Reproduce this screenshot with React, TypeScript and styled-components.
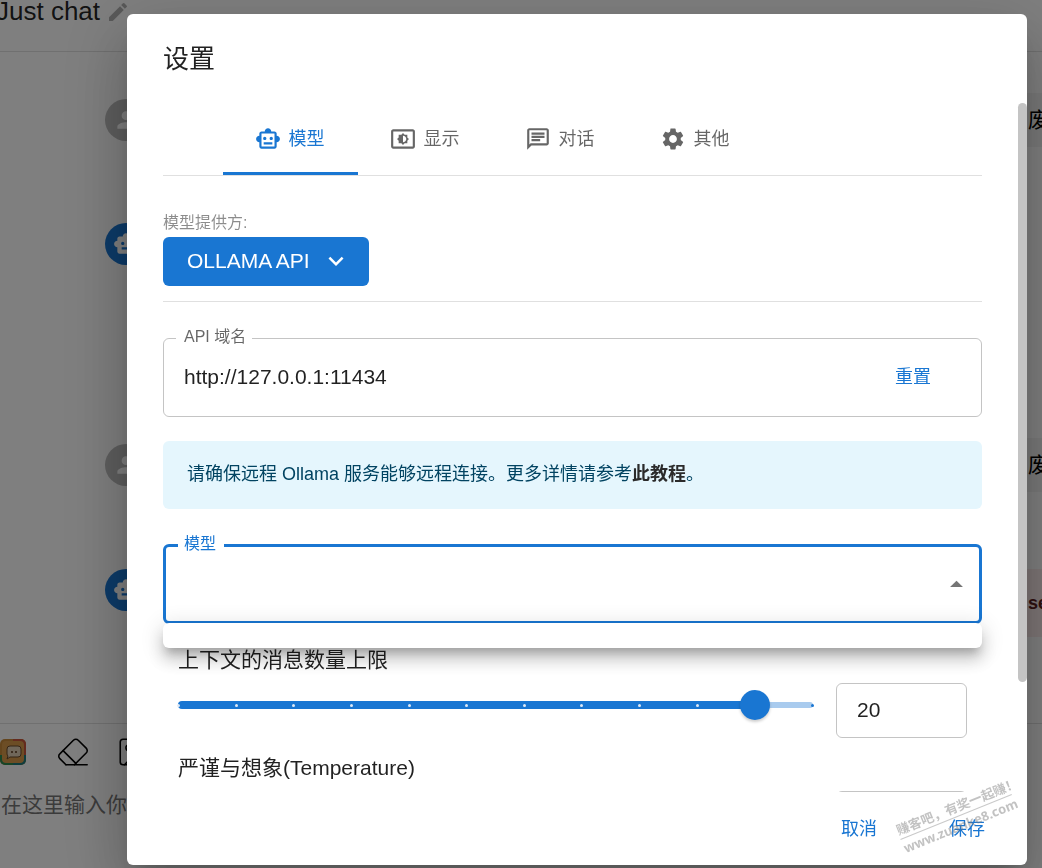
import React, { useState } from "react";
import styled, { createGlobalStyle } from "styled-components";
import {
  MdArrowDropUp,
  MdEdit,
  MdKeyboardArrowDown,
  MdOutlineChat,
  MdOutlineSmartToy,
  MdPerson,
  MdSettings,
  MdSettingsBrightness,
  MdSmartToy,
} from "react-icons/md";

const blue = "#1976d2";
const textColor = "rgba(0, 0, 0, 0.87)";
const mutedColor = "rgba(0, 0, 0, 0.6)";
const lineColor = "rgba(0, 0, 0, 0.12)";
const outlineColor = "rgba(0, 0, 0, 0.23)";

const GlobalStyle = createGlobalStyle`
  *, *::before, *::after { box-sizing: border-box; }
  body {
    margin: 0;
    overflow: hidden;
    background: #fff;
    color: ${textColor};
    font-family: "Liberation Sans", "Noto Sans CJK SC", sans-serif;
    font-size: 21px;
    font-weight: 400;
    line-height: 32px;
  }
  button, input, select, textarea { font: inherit; color: inherit; }
`;

/* Chat page behind the dialog */

const ChatPage = styled.div`
  display: flex;
  flex-direction: column;
  height: 100vh;
  overflow: hidden;
`;

const ChatHeader = styled.header`
  display: flex;
  align-items: flex-start;
  gap: 5px;
  flex: none;
  height: 52px;
  margin-left: -4px;
  border-bottom: 1px solid ${lineColor};
`;

const ChatTitle = styled.h1`
  margin: 0;
  font-size: 26px;
  font-weight: 400;
  line-height: 22px;
`;

const EditIcon = styled(MdEdit)`
  width: 26px;
  height: 24px;
  color: rgba(0, 0, 0, 0.3);
`;

const Messages = styled.main`
  display: flex;
  flex-direction: column;
  flex: 1;
  min-height: 0;
  padding: 41px 0 0 105px;
  overflow: hidden;
`;

const Message = styled.article<{ $height: number }>`
  display: flex;
  align-items: flex-start;
  flex: none;
  gap: 24px;
  height: ${(p) => p.$height}px;
`;

const Avatar = styled.div<{ $bot?: boolean }>`
  display: flex;
  align-items: center;
  justify-content: center;
  flex: none;
  width: 42px;
  height: 42px;
  margin-top: 6px;
  border-radius: 50%;
  background: ${(p) => (p.$bot ? blue : "#bdbdbd")};
  color: #fff;

  svg {
    width: 26px;
    height: 26px;
  }
`;

const Bubble = styled.div<{ $error?: boolean }>`
  display: flex;
  justify-content: flex-end;
  flex: 1;
  min-width: 0;
  margin-top: ${(p) => (p.$error ? 6 : 0)}px;
  padding: ${(p) => (p.$error ? "18px 0" : "11px 0")};
  background: ${(p) => (p.$error ? "#fdeded" : "#f4f4f4")};
  color: ${(p) => (p.$error ? "#5f2120" : "#000")};
  font-size: ${(p) => (p.$error ? 18 : 21)}px;
  font-weight: ${(p) => (p.$error ? 700 : 400)};
`;

const BubbleText = styled.span`
  width: 14px;
  white-space: nowrap;
`;

const Composer = styled.footer`
  display: flex;
  flex-direction: column;
  flex: none;
  height: 145px;
  padding-top: 11px;
  border-top: 1px solid ${lineColor};
`;

const ComposerTools = styled.div`
  display: flex;
  gap: 26px;
  margin-left: -4px;
`;

const ToolButton = styled.button`
  width: 34px;
  height: 34px;
  padding: 0;
  border: 0;
  background: none;

  svg {
    display: block;
    width: 34px;
    height: 34px;
  }
`;

const ComposerInput = styled.textarea`
  flex: 1;
  margin-top: 20px;
  padding: 0 0 0 1px;
  border: 0;
  outline: 0;
  resize: none;
  background: none;

  &::placeholder {
    color: #777;
  }
`;

/* Dialog */

const Backdrop = styled.div`
  position: fixed;
  inset: 0;
  display: flex;
  padding: 14px 15px 3px 127px;
  background: rgba(0, 0, 0, 0.5);
`;

const Dialog = styled.section`
  position: relative;
  display: flex;
  flex-direction: column;
  flex: 1;
  min-width: 0;
  border-radius: 6px;
  background: #fff;
  box-shadow:
    0 16px 22px -10px rgba(0, 0, 0, 0.2),
    0 36px 57px 4px rgba(0, 0, 0, 0.14),
    0 14px 69px 12px rgba(0, 0, 0, 0.12);
`;

const DialogTitle = styled.h2`
  flex: none;
  margin: 0;
  padding: 25px 36px 24px;
  font-size: 26px;
  font-weight: 400;
  line-height: 40px;
`;

const DialogBody = styled.div`
  display: flex;
  flex: 1;
  min-height: 0;
`;

const Content = styled.div`
  flex: 1;
  min-width: 0;
  padding: 0 36px;
  overflow: hidden;
`;

const Scrollbar = styled.div`
  flex: none;
  width: 9px;
`;

const ScrollThumb = styled.div`
  height: 84%;
  border-radius: 5px;
  background: #c4c4c4;
`;

const Tabs = styled.div`
  display: flex;
  height: 73px;
  padding-left: 60px;
  border-bottom: 1px solid ${lineColor};
`;

const Tab = styled.button<{ $active: boolean }>`
  display: flex;
  align-items: center;
  justify-content: center;
  gap: 8px;
  width: 135px;
  padding: 2px 2px 0 0;
  border: 0;
  border-bottom: 3px solid ${(p) => (p.$active ? blue : "transparent")};
  background: none;
  color: ${(p) => (p.$active ? blue : mutedColor)};
  font-size: 18px;
  line-height: 24px;

  svg {
    width: 26px;
    height: 26px;
  }
`;

const Provider = styled.div`
  display: flex;
  flex-direction: column;
  align-items: flex-start;
  padding: 34px 0 15px;
  border-bottom: 1px solid ${lineColor};
`;

const ProviderLabel = styled.span`
  margin-bottom: 2px;
  color: rgba(0, 0, 0, 0.45);
  font-size: 16px;
  line-height: 25px;
`;

const ProviderButton = styled.button`
  display: flex;
  align-items: center;
  gap: 11px;
  height: 49px;
  padding: 0 18px 2px 24px;
  border: 0;
  border-radius: 6px;
  background: ${blue};
  color: #fff;

  svg {
    width: 30px;
    height: 30px;
  }
`;

const Field = styled.fieldset<{ $focused?: boolean }>`
  min-width: 0;
  height: 90px;
  margin: 25px 0 0;
  padding: 0 20px;
  border: ${(p) => (p.$focused ? `3px solid ${blue}` : `1px solid ${outlineColor}`)};
  border-radius: 6px;

  legend {
    margin-left: -8px;
    padding: ${(p) => (p.$focused ? "0 8px 2px 6px" : "0 6px 2px 8px")};
    color: ${(p) => (p.$focused ? blue : mutedColor)};
    font-size: 16px;
    line-height: 20px;
  }
`;

const FieldRow = styled.div`
  display: flex;
  align-items: center;
  height: 56px;
`;

const TextInput = styled.input`
  flex: 1;
  min-width: 0;
  padding: 0;
  border: 0;
  outline: 0;
  background: none;
`;

const TextButton = styled.button`
  padding: 8px 12px;
  border: 0;
  background: none;
  color: ${blue};
  font-size: 18px;
  line-height: 24px;
`;

const ResetButton = styled(TextButton)`
  margin-right: 18px;
`;

const Notice = styled.p`
  margin: 24px 0 0;
  padding: 17px 24px 19px;
  border-radius: 6px;
  background: #e5f6fd;
  color: #014361;
  font-size: 18px;
  line-height: 32px;

  a {
    color: #2b2b2b;
    font-weight: 700;
    text-decoration: none;
  }
`;

const SelectWrap = styled.div`
  position: relative;
`;

const ModelSelect = styled.select`
  appearance: none;
  width: 100%;
  height: 48px;
  border: 0;
  outline: 0;
  background: none;
`;

const SelectArrow = styled(MdArrowDropUp)`
  position: absolute;
  right: 10px;
  bottom: 24px;
  width: 31px;
  height: 31px;
  color: rgba(0, 0, 0, 0.54);
  pointer-events: none;
`;

const Menu = styled.ul`
  position: absolute;
  top: 100%;
  left: 0;
  right: 0;
  z-index: 1;
  height: 25px;
  margin: -1px 0 0;
  padding: 0;
  border-radius: 6px;
  background: #fff;
  box-shadow:
    0 8px 8px -4px rgba(0, 0, 0, 0.2),
    0 12px 15px 1px rgba(0, 0, 0, 0.14),
    0 4px 21px 3px rgba(0, 0, 0, 0.12);
`;

const SliderGroup = styled.div`
  display: flex;
  flex-direction: column;
  gap: 21px;
  padding: 20px 15px 24px;
`;

const SliderSetting = styled.div`
  label {
    display: block;
  }
`;

const SliderRow = styled.div`
  display: flex;
  align-items: flex-start;
  gap: 23px;
  margin-top: 7px;
  height: 48px;
`;

const Slider = styled.div`
  position: relative;
  display: flex;
  align-items: center;
  flex: 1;
  height: 44px;
`;

const Rail = styled.div`
  position: absolute;
  left: 0;
  right: 0;
  height: 6px;
  border-radius: 3px;
  background: #a9cbee;
`;

const Fill = styled.div`
  position: absolute;
  left: 0;
  height: 8px;
  border-radius: 4px;
  background: ${blue};
`;

const Marks = styled.div`
  position: absolute;
  left: -1px;
  right: -1px;
  display: flex;
  justify-content: space-between;
`;

const Mark = styled.span<{ $passed: boolean }>`
  width: 3px;
  height: 3px;
  border-radius: 50%;
  background: ${(p) => (p.$passed ? "#dfeaf7" : blue)};
`;

const RangeInput = styled.input`
  appearance: none;
  position: absolute;
  left: -15px;
  width: calc(100% + 30px);
  height: 30px;
  margin: 0;
  background: none;

  &::-webkit-slider-thumb {
    appearance: none;
    width: 30px;
    height: 30px;
    border: 0;
    border-radius: 50%;
    background: ${blue};
    box-shadow: 0 2px 3px rgba(0, 0, 0, 0.2);
  }
`;

const NumberInput = styled.input`
  flex: none;
  width: 131px;
  height: 55px;
  padding: 0 20px 2px;
  border: 1px solid ${outlineColor};
  border-radius: 6px;
  background: none;
`;

const Actions = styled.div`
  display: flex;
  justify-content: flex-end;
  align-items: center;
  flex: none;
  gap: 48px;
  height: 73px;
  padding-right: 30px;
`;

const Watermark = styled.div`
  position: absolute;
  right: 3px;
  bottom: 31px;
  width: 128px;
  color: rgba(120, 120, 120, 0.45);
  font-size: 13px;
  font-weight: 700;
  line-height: 17px;
  white-space: nowrap;
  transform: rotate(-22deg);
  pointer-events: none;
`;

const WatermarkSite = styled.div`
  margin-right: 8px;
  border-top: 1px solid rgba(120, 120, 120, 0.4);
  font-family: "Noto Sans", sans-serif;
  line-height: 18px;
`;

function AppLogo() {
  return (
    <svg viewBox="0 0 34 34" aria-hidden="true">
      <rect x="4" y="4" width="26" height="26" rx="5" fill="#c98a3a" />
      <path d="M17 4h8a5 5 0 0 1 5 5v13H17z" fill="#c8553c" />
      <path d="M4 20h13v10H9a5 5 0 0 1-5-5z" fill="#2f8a50" />
      <path d="M17 20h13v5a5 5 0 0 1-5 5h-8z" fill="#1f7a7c" />
      <rect x="6" y="6" width="22" height="22" rx="4" fill="#d99a4a" />
      <path
        d="M14 11h8a3 3 0 0 1 3 3v5a3 3 0 0 1-3 3h-8l-3 2 1-3a3 3 0 0 1-1-2v-5a3 3 0 0 1 3-3z"
        fill="#e0cfb4"
        stroke="#6b4a2a"
        strokeWidth="1"
      />
      <circle cx="16" cy="17" r="1" fill="#5c3a1c" />
      <circle cx="20" cy="17" r="1" fill="#5c3a1c" />
    </svg>
  );
}

function EraserIcon() {
  return (
    <svg viewBox="0 0 24 24" fill="none" stroke="#000" strokeWidth="1.100" strokeLinecap="round" strokeLinejoin="round" aria-hidden="true">
      <path d="m7 21-4.300-4.300c-1-1-1-2.500 0-3.400l9.600-9.600c1-1 2.500-1 3.400 0l5.600 5.600c1 1 1 2.500 0 3.400L13 21" />
      <path d="M22 21H7" />
      <path d="m5 11 9 9" />
    </svg>
  );
}

function PictureIcon() {
  return (
    <svg viewBox="0 0 24 24" fill="none" stroke="#000" strokeWidth="1.100" strokeLinecap="round" strokeLinejoin="round" aria-hidden="true">
      <rect x="3" y="3" width="18" height="18" rx="2" />
      <circle cx="9" cy="9" r="2" />
      <path d="m21 15-3.100-3.100a2 2 0 0 0-2.800 0L6 21" />
    </svg>
  );
}

const tabs = [
  { name: "模型", Icon: MdOutlineSmartToy },
  { name: "显示", Icon: MdSettingsBrightness },
  { name: "对话", Icon: MdOutlineChat },
  { name: "其他", Icon: MdSettings },
];

const messages = [
  { bot: false, error: false, text: "废", height: 124 },
  { bot: true, error: false, text: "", height: 221 },
  { bot: false, error: false, text: "废", height: 125 },
  { bot: true, error: true, text: "se", height: 80 },
];

interface SliderFieldProps {
  id: string;
  label: string;
  max: number;
  steps: number;
  initial: number;
}

function SliderField({ id, label, max, steps, initial }: SliderFieldProps) {
  const [value, setValue] = useState(initial);
  const ratio = value / max;
  return (
    <SliderSetting>
      <label htmlFor={id}>{label}</label>
      <SliderRow>
        <Slider>
          <Rail />
          <Fill style={{ width: `${ratio * 100}%` }} />
          <Marks>
            {Array.from({ length: steps + 1 }, (_, i) => (
              <Mark key={i} $passed={i / steps <= ratio} />
            ))}
          </Marks>
          <RangeInput
            id={id}
            type="range"
            min={0}
            max={max}
            step={max / steps}
            value={value}
            onChange={(e) => setValue(Number(e.target.value))}
          />
        </Slider>
        <NumberInput
          aria-label={label}
          value={value}
          onChange={(e) => setValue(Number(e.target.value) || 0)}
        />
      </SliderRow>
    </SliderSetting>
  );
}

export default function App() {
  const [active, setActive] = useState(0);
  const [host, setHost] = useState("http://127.0.0.1:11434");

  return (
    <>
      <GlobalStyle />
      <ChatPage>
        <ChatHeader>
          <ChatTitle>Just chat</ChatTitle>
          <EditIcon />
        </ChatHeader>
        <Messages>
          {messages.map((m, i) => (
            <Message key={i} $height={m.height}>
              <Avatar $bot={m.bot}>{m.bot ? <MdSmartToy /> : <MdPerson />}</Avatar>
              {m.text && (
                <Bubble $error={m.error}>
                  <BubbleText>{m.text}</BubbleText>
                </Bubble>
              )}
            </Message>
          ))}
        </Messages>
        <Composer>
          <ComposerTools>
            <ToolButton aria-label="Chatbox"><AppLogo /></ToolButton>
            <ToolButton aria-label="清空"><EraserIcon /></ToolButton>
            <ToolButton aria-label="图片"><PictureIcon /></ToolButton>
          </ComposerTools>
          <ComposerInput aria-label="输入" placeholder="在这里输入你的问题..." />
        </Composer>
      </ChatPage>

      <Backdrop>
        <Dialog role="dialog" aria-modal="true" aria-labelledby="settings-title">
          <DialogTitle id="settings-title">设置</DialogTitle>
          <DialogBody>
            <Content>
              <Tabs role="tablist">
                {tabs.map(({ name, Icon }, i) => (
                  <Tab
                    key={name}
                    role="tab"
                    aria-selected={i === active}
                    $active={i === active}
                    onClick={() => setActive(i)}
                  >
                    <Icon />
                    {name}
                  </Tab>
                ))}
              </Tabs>

              <Provider>
                <ProviderLabel>模型提供方:</ProviderLabel>
                <ProviderButton>
                  OLLAMA API
                  <MdKeyboardArrowDown />
                </ProviderButton>
              </Provider>

              <Field>
                <legend>
                  <label htmlFor="api-host">API 域名</label>
                </legend>
                <FieldRow>
                  <TextInput id="api-host" value={host} onChange={(e) => setHost(e.target.value)} />
                  <ResetButton onClick={() => setHost("http://127.0.0.1:11434")}>重置</ResetButton>
                </FieldRow>
              </Field>

              <Notice>
                请确保远程 Ollama 服务能够远程连接。更多详情请参考<a href="#tutorial">此教程</a>。
              </Notice>

              <SelectWrap>
                <Field $focused>
                  <legend>
                    <label htmlFor="model">模型</label>
                  </legend>
                  <ModelSelect id="model" />
                </Field>
                <SelectArrow />
                <Menu />
              </SelectWrap>

              <SliderGroup>
                <SliderField id="context" label="上下文的消息数量上限" max={22} steps={11} initial={20} />
                <SliderField id="temperature" label="严谨与想象(Temperature)" max={1} steps={10} initial={0.7} />
              </SliderGroup>
            </Content>
            <Scrollbar aria-hidden="true">
              <ScrollThumb />
            </Scrollbar>
          </DialogBody>
          <Actions>
            <TextButton>取消</TextButton>
            <TextButton>保存</TextButton>
          </Actions>
          <Watermark aria-hidden="true">
            赚客吧，有奖一起赚！
            <WatermarkSite>www.zuanke8.com</WatermarkSite>
          </Watermark>
        </Dialog>
      </Backdrop>
    </>
  );
}
